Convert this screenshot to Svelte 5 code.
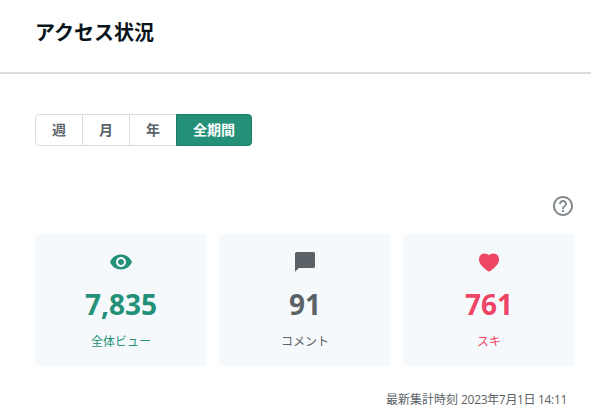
<script>
	let selected = 'all';

	const periods = [
		{ id: 'week', label: '週' },
		{ id: 'month', label: '月' },
		{ id: 'year', label: '年' },
		{ id: 'all', label: '全期間' }
	];

	const stats = [
		{
			id: 'views',
			label: '全体ビュー',
			value: 7835,
			icon: 'M12 4.5C7 4.5 2.73 7.61 1 12c1.73 4.39 6 7.5 11 7.5s9.27-3.11 11-7.5c-1.73-4.39-6-7.5-11-7.5zM12 17c-2.76 0-5-2.24-5-5s2.24-5 5-5 5 2.24 5 5-2.24 5-5 5zm0-8c-1.66 0-3 1.34-3 3s1.34 3 3 3 3-1.34 3-3-1.34-3-3-3z'
		},
		{
			id: 'comments',
			label: 'コメント',
			value: 91,
			icon: 'M20.5 2H4c-1.1 0-2 .6-2 1.5v18.3L6 18h14.5c.9 0 1.5-.6 1.5-1.5v-13c0-.9-.6-1.5-1.5-1.5z'
		},
		{
			id: 'likes',
			label: 'スキ',
			value: 761,
			icon: 'M12 21.5c-.7 0-1.3-.5-2-1.1C5 16.400 2 13.600 2 9.400 2 5.900 4.300 3.400 7.500 3.400c1.800 0 3.400.7 4.500 1.800 1.100-1.100 2.700-1.800 4.500-1.800 3.200 0 5.500 2.500 5.500 6 0 4.200-3 7-8 11-.7.6-1.300 1.100-2 1.100z'
		}
	];
</script>

<header>
	<h1>アクセス状況</h1>
</header>

<main>
	<div class="periods">
		{#each periods as period}
			<button class:active={selected === period.id} on:click={() => (selected = period.id)}>
				{period.label}
			</button>
		{/each}
	</div>

	<div class="help">
		<svg viewBox="0 0 24 24" width="24" height="24">
			<path d="M11 18h2v-2h-2v2zm1-16C6.48 2 2 6.48 2 12s4.48 10 10 10 10-4.48 10-10S17.52 2 12 2zm0 18c-4.41 0-8-3.59-8-8s3.59-8 8-8 8 3.59 8 8-3.59 8-8 8zm0-14c-2.21 0-4 1.79-4 4h2c0-1.1.9-2 2-2s2 .9 2 2c0 2-3 1.75-3 5h2c0-2.25 3-2.5 3-5 0-2.21-1.79-4-4-4z" />
		</svg>
	</div>

	<div class="cards">
		{#each stats as stat}
			<div class="card {stat.id}">
				<svg viewBox="0 0 24 24" width="24" height="24">
					<path d={stat.icon} />
				</svg>
				<strong>{stat.value.toLocaleString('en-US')}</strong>
				<span>{stat.label}</span>
			</div>
		{/each}
	</div>

	<p class="updated">最新集計時刻 <time>2023年7月1日 14:11</time></p>
</main>

<style>
	:global(body) {
		background: #fff;
		font-family: 'Open Sans', 'Noto Sans CJK JP', sans-serif;
	}

	header {
		display: flex;
		align-items: center;
		box-sizing: border-box;
		height: 74px;
		padding: 0 35px 6px;
		border-bottom: 2px solid #dcdcdc;
	}

	h1 {
		margin: 0;
		font-size: 20px;
		line-height: 30px;
		font-weight: 700;
		color: #08131a;
	}

	main {
		padding: 40px 16px 0 35px;
	}

	.periods {
		display: flex;
	}

	button {
		box-sizing: border-box;
		height: 32px;
		margin: 0 0 0 -1px;
		padding: 0 16px;
		border: 1px solid #dcdcdc;
		background: #fff;
		color: #5a6267;
		font-family: inherit;
		font-size: 14px;
		font-weight: 700;
		line-height: 30px;
		cursor: pointer;
	}

	button:first-child {
		margin-left: 0;
		border-radius: 4px 0 0 4px;
	}

	button:last-child {
		border-radius: 0 4px 4px 0;
	}

	button.active {
		border-color: #1e7b65;
		background: #249078;
		color: #fff;
	}

	svg {
		display: block;
		fill: currentColor;
	}

	.help {
		display: flex;
		justify-content: flex-end;
		margin-top: 48px;
		color: #82898d;
	}

	.cards {
		display: flex;
		gap: 12px;
		margin-top: 16px;
	}

	.card {
		display: flex;
		flex: 1;
		flex-direction: column;
		align-items: center;
		box-sizing: border-box;
		height: 132px;
		padding-top: 16px;
		border-radius: 4px;
		background: #f5f9fb;
	}

	.card strong {
		margin-top: 9px;
		font-size: 28px;
		line-height: 42px;
	}

	.card span {
		margin-top: 8px;
		font-size: 12px;
		line-height: 18px;
	}

	.views {
		color: #249078;
	}

	.comments {
		color: #5a6267;
	}

	.likes {
		color: #ef4565;
	}

	.updated {
		margin: 25px 8px 0 0;
		font-size: 12px;
		line-height: 18px;
		text-align: right;
		color: #5a6267;
	}

	.updated time {
		letter-spacing: -0.33px;
	}
</style>
